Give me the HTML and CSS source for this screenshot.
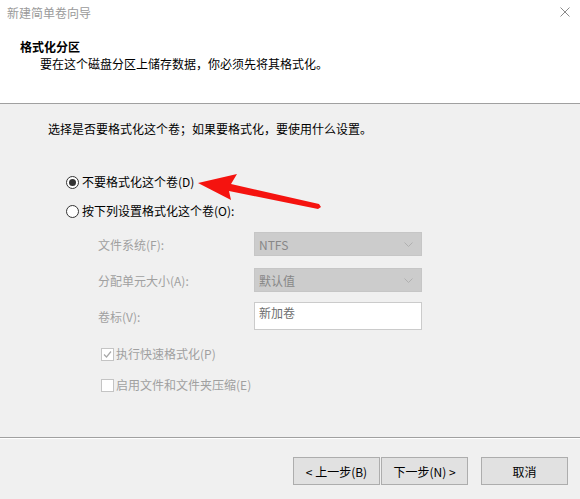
FILE: index.html
```html
<!DOCTYPE html>
<html lang="zh-CN">
<head>
    <meta charset="UTF-8">
    <title>新建简单卷向导</title>
    <link rel="stylesheet" href="styles.css">
</head>
<body>

<div class="window">
    <div class="header">
        <div class="titlebar">
            <span class="title">新建简单卷向导</span>
            <svg class="close" width="10" height="10" viewBox="0 0 10 10">
                <path d="M0.5 0.5 L9.5 9.5 M9.5 0.5 L0.5 9.5" stroke="#8a8a8a" stroke-width="1" fill="none"/>
            </svg>
        </div>
        <div class="heading">格式化分区</div>
        <div class="subtitle">要在这个磁盘分区上储存数据，你必须先将其格式化。</div>
    </div>

    <div class="content">
        <p class="intro">选择是否要格式化这个卷；如果要格式化，要使用什么设置。</p>

        <div class="option option-first">
            <span class="radio radio-checked"></span>不要格式化这个卷(D)
        </div>
        <div class="option option-second">
            <span class="radio"></span>按下列设置格式化这个卷(O):
        </div>

        <div class="fields">
            <div class="field">
                <span class="field-label">文件系统(F):</span>
                <div class="combo">NTFS
                    <svg width="9" height="5" viewBox="0 0 9 5"><polyline points="0.5,0.5 4.5,4.5 8.5,0.5" stroke="#b0b0b0" fill="none"/></svg>
                </div>
            </div>
            <div class="field field-second">
                <span class="field-label">分配单元大小(A):</span>
                <div class="combo">默认值
                    <svg width="9" height="5" viewBox="0 0 9 5"><polyline points="0.5,0.5 4.5,4.5 8.5,0.5" stroke="#b0b0b0" fill="none"/></svg>
                </div>
            </div>
            <div class="field field-third">
                <span class="field-label">卷标(V):</span>
                <div class="textbox">新加卷</div>
            </div>
        </div>

        <div class="check-row check-first">
            <span class="check">
                <svg width="11" height="11" viewBox="0 0 11 11"><polyline points="2,5.5 4.5,8 9,2.5" stroke="#a8a8a8" stroke-width="1.2" fill="none"/></svg>
            </span>执行快速格式化(P)
        </div>
        <div class="check-row check-second">
            <span class="check"></span>启用文件和文件夹压缩(E)
        </div>
    </div>

    <div class="footer">
        <button class="btn">&lt; 上一步(B)</button>
        <button class="btn btn-next">下一步(N) &gt;</button>
        <button class="btn btn-cancel">取消</button>
    </div>

    <!-- red annotation arrow -->
    <svg class="arrow" width="580" height="499" viewBox="0 0 580 499">
        <polygon points="198,183 237,174 231,184 319,204 321,207 318,209 229,191 231,200" fill="#f5130f"/>
    </svg>
</div>

</body>
</html>
```

FILE: styles.css
```css
* {
    box-sizing: border-box;
}

body {
    margin: 0;
    width: 580px;
    height: 499px;
    overflow: hidden;
    background: #f0f0f0;
    color: #000;
    font-family: "Noto Sans CJK SC", "Microsoft YaHei", sans-serif;
    font-size: 12px;
}

.window {
    position: relative;
    height: 499px;
    display: flex;
    flex-direction: column;
}

/* Header */
.header {
    height: 104px;
    background: #fff;
    border-bottom: 1px solid #a0a0a0;
}

.titlebar {
    height: 24px;
    display: flex;
    align-items: center;
    justify-content: space-between;
    padding: 0 10px 0 7px;
    color: #9a9a9a;
}

.heading {
    margin-top: 15px;
    padding-left: 20px;
    line-height: 16px;
    font-weight: bold;
}

.subtitle {
    margin-top: 1px;
    padding-left: 40px;
    line-height: 16px;
}

/* Content */
.content {
    flex: 1;
    padding-top: 17px;
}

.intro {
    margin: 0;
    padding-left: 48px;
    line-height: 16px;
}

.option {
    display: flex;
    align-items: center;
    padding-left: 66px;
    line-height: 16px;
}

.option-first {
    margin-top: 37px;
}

.option-second {
    margin-top: 13px;
}

.radio {
    width: 13px;
    height: 13px;
    margin-right: 3px;
    border: 1px solid #333;
    border-radius: 50%;
    background: #fff;
    display: flex;
    align-items: center;
    justify-content: center;
}

.radio-checked::after {
    content: "";
    width: 7px;
    height: 7px;
    border-radius: 50%;
    background: #333;
}

.fields {
    margin-top: 13px;
    padding-left: 98px;
    display: flex;
    flex-direction: column;
}

.field {
    display: flex;
    align-items: center;
}

.field-second {
    margin-top: 12px;
}

.field-third {
    margin-top: 10px;
}

.field-label {
    width: 156px;
    color: #a0a0a0;
}

.combo {
    width: 168px;
    height: 24px;
    padding: 0 8px 0 4px;
    background: #cccccc;
    border: 1px solid #c6c6c6;
    color: #878787;
    display: flex;
    align-items: center;
    justify-content: space-between;
}

.textbox {
    width: 168px;
    height: 28px;
    padding: 2px 4px 0;
    background: #fff;
    border: 1px solid #cbcbcb;
    color: #6d6d6d;
    line-height: 16px;
}

.check-row {
    display: flex;
    align-items: center;
    padding-left: 101px;
    line-height: 16px;
    color: #a0a0a0;
}

.check-first {
    margin-top: 16px;
}

.check-second {
    margin-top: 15px;
}

.check {
    width: 13px;
    height: 13px;
    margin-right: 2px;
    border: 1px solid #c4c4c4;
    background: #fff;
    display: flex;
    align-items: center;
    justify-content: center;
}

/* Footer */
.footer {
    height: 62px;
    padding: 19px 12px 0 0;
    border-top: 1px solid #a0a0a0;
    box-shadow: inset 0 1px 0 #fff;
    display: flex;
    justify-content: flex-end;
    align-items: flex-start;
}

.btn {
    width: 87px;
    height: 28px;
    padding: 0;
    background: #e1e1e1;
    border: 1px solid #adadad;
    color: #000;
    font-family: inherit;
    font-size: 12px;
}

.btn-next {
    margin-left: 1px;
}

.btn-cancel {
    margin-left: 13px;
}

.arrow {
    position: absolute;
    left: 0;
    top: 0;
    pointer-events: none;
}
```
